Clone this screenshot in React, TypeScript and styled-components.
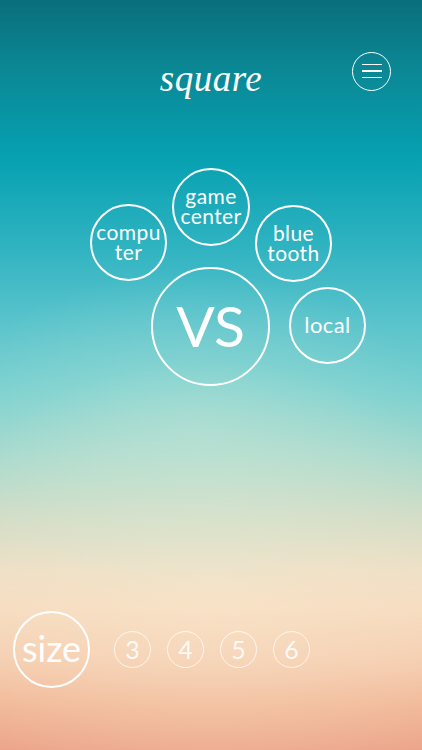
import React from 'react';
import styled, { createGlobalStyle } from 'styled-components';

const GlobalStyle = createGlobalStyle`
  html, body {
    margin: 0;
    padding: 0;
  }
  body {
    font-family: 'Lato', 'Open Sans', sans-serif;
  }
`;

const Screen = styled.div`
  position: relative;
  width: 100%;
  min-height: 750px;
  overflow: hidden;
  display: flex;
  flex-direction: column;
  color: #fff;
  background:
    radial-gradient(ellipse 60% 22% at 45% 58%, rgba(190, 230, 215, 0.45), rgba(190, 230, 215, 0) 100%),
    radial-gradient(ellipse 70% 30% at 50% 78%, rgba(250, 232, 205, 0.5), rgba(250, 232, 205, 0) 100%),
    linear-gradient(
      to bottom,
      #0a6e7b 0%,
      #0b8794 9%,
      #06a1b2 21%,
      #30b3c1 33%,
      #56c2cb 42%,
      #7ad0d0 52%,
      #a6d9cd 61%,
      #cfdcc6 69%,
      #ecdfc6 76%,
      #f6dcc0 81%,
      #f5cdb0 88%,
      #f1b898 94%,
      #eca58b 100%
    );
`;

const Header = styled.header`
  display: grid;
  grid-template-columns: 1fr auto 1fr;
  align-items: center;
  padding: 51px 31px 0 31px;
  height: 40px;
`;

const Title = styled.h1`
  grid-column: 2;
  margin: 0;
  font-family: 'Liberation Serif', 'DejaVu Serif', serif;
  font-style: italic;
  font-weight: 400;
  font-size: 37px;
  letter-spacing: 0.5px;
  line-height: 1;
  transform: translateY(7px);
`;

const MenuButton = styled.button`
  grid-column: 3;
  justify-self: end;
  width: 39px;
  height: 39px;
  border: 1.6px solid #fff;
  border-radius: 50%;
  background: transparent;
  display: flex;
  flex-direction: column;
  align-items: center;
  justify-content: center;
  gap: 5px;
  padding: 0;
  cursor: pointer;
`;

const MenuLine = styled.span`
  display: block;
  width: 20px;
  height: 1.6px;
  background: #fff;
`;

/* free-form bubble cluster: each bubble's spot is part of the design */
const Cluster = styled.div`
  position: relative;
  width: 422px;
  height: 230px;
  margin-top: 70px;
`;

const Bubble = styled.button<{ $size: number; $font: number }>`
  position: absolute;
  width: ${(p) => p.$size}px;
  height: ${(p) => p.$size}px;
  border: 2px solid #fff;
  border-radius: 50%;
  background: transparent;
  color: #fff;
  font-family: 'Lato', 'Open Sans', sans-serif;
  font-size: ${(p) => p.$font}px;
  letter-spacing: ${(p) => (p.$font > 30 ? 0 : 0.4)}px;
  padding: 0 0 2px 0;
  display: flex;
  flex-direction: column;
  align-items: center;
  justify-content: center;
  text-align: center;
  box-sizing: border-box;
  cursor: pointer;
`;

const BubbleLine = styled.span<{ $lh: number }>`
  display: block;
  line-height: ${(p) => p.$lh}px;
  height: ${(p) => p.$lh}px;
`;

const Spacer = styled.div`
  flex: 1;
`;

const SizeRow = styled.div`
  display: flex;
  align-items: center;
  padding: 0 0 62px 13px;
`;

const SizeBubble = styled.div`
  width: 77px;
  height: 77px;
  border: 2px solid #fff;
  border-radius: 50%;
  box-sizing: border-box;
  display: flex;
  align-items: center;
  justify-content: center;
  font-size: 36px;
  line-height: 1;
  padding-bottom: 4px;
  margin-right: 24px;
`;

const Options = styled.div`
  display: flex;
  gap: 16px;
`;

const SizeOption = styled.button`
  width: 37px;
  height: 37px;
  border: 1.5px solid rgba(255, 255, 255, 0.75);
  border-radius: 50%;
  background: transparent;
  color: rgba(255, 255, 255, 0.88);
  font-family: 'Lato', 'Open Sans', sans-serif;
  font-size: 25px;
  line-height: 1;
  padding: 0 0 1px 0;
  display: flex;
  align-items: center;
  justify-content: center;
  box-sizing: border-box;
  cursor: pointer;
`;

type Mode = { label: string[]; x: number; y: number; size: number; font: number };

const modes: Mode[] = [
  { label: ['compu', 'ter'], x: 90, y: 43, size: 77, font: 21 },
  { label: ['game', 'center'], x: 172, y: 7, size: 78, font: 21 },
  { label: ['blue', 'tooth'], x: 255, y: 44, size: 77, font: 21 },
  { label: ['VS'], x: 151, y: 106, size: 119, font: 57 },
  { label: ['local'], x: 289, y: 126, size: 77, font: 22 },
];

export default function App() {
  return (
    <>
      <GlobalStyle />
      <Screen>
        <Header>
          <Title>square</Title>
          <MenuButton aria-label="menu">
            <MenuLine />
            <MenuLine />
            <MenuLine />
          </MenuButton>
        </Header>

        <Cluster>
          {modes.map((m) => (
            <Bubble
              key={m.label.join('')}
              $size={m.size}
              $font={m.font}
              style={{ left: m.x, top: m.y }}
            >
              {m.label.map((l) => (
                <BubbleLine key={l} $lh={m.label.length > 1 ? 20 : m.font}>
                  {l}
                </BubbleLine>
              ))}
            </Bubble>
          ))}
        </Cluster>

        <Spacer />

        <SizeRow>
          <SizeBubble>size</SizeBubble>
          <Options>
            {[3, 4, 5, 6].map((n) => (
              <SizeOption key={n}>{n}</SizeOption>
            ))}
          </Options>
        </SizeRow>
      </Screen>
    </>
  );
}
